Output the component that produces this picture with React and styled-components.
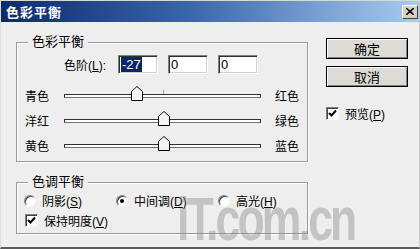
import React from "react";
import styled, { createGlobalStyle } from "styled-components";

const GlobalStyle = createGlobalStyle`
  html, body {
    margin: 0;
    padding: 0;
    background: #eeeeee;
  }
  body {
    font-family: "Liberation Sans", "Noto Sans CJK SC", sans-serif;
    font-size: 12px;
    color: #000;
  }
`;

const Window = styled.div`
  position: relative;
  width: 420px;
  height: 249px;
  box-sizing: border-box;
  background: #eeeeee;
  border-left: 1px solid #dcdcdc;
  border-right: 1px solid #c8c8c8;
  border-bottom: 2px solid #5a5a5a;
  overflow: hidden;
`;

const TitleBar = styled.div`
  height: 21px;
  display: flex;
  align-items: center;
  justify-content: space-between;
  padding: 0 1px 0 5px;
  background: linear-gradient(to right, #0c2a6c 0%, #3a66aa 45%, #a8ccf0 100%);
  border-top: 1px solid #d8d8d8;
`;

const TitleText = styled.span`
  color: #fff;
  font-weight: 700;
  font-size: 13px;
  letter-spacing: 1px;
`;

const CloseButton = styled.div`
  width: 16px;
  height: 14px;
  box-sizing: border-box;
  background: #d4d0c8;
  border: 1px solid;
  border-color: #fff #404040 #404040 #fff;
  display: flex;
  align-items: center;
  justify-content: center;
`;

const Body = styled.div`
  display: flex;
  padding: 20px 0 0 15px;
  gap: 18px;
`;

const LeftColumn = styled.div`
  display: flex;
  flex-direction: column;
  gap: 20px;
  width: 292px;
`;

const Group = styled.div`
  position: relative;
  box-sizing: border-box;
  height: ${(p) => p.$h}px;
  border: 1px solid #9a9a9a;
  box-shadow: inset 1px 1px 0 #fff, 1px 1px 0 #fff;
  padding: ${(p) => p.$pad};
`;

const GroupTitle = styled.span`
  position: absolute;
  top: -9px;
  left: 11px;
  padding: 0 4px;
  background: #eeeeee;
  font-size: 13px;
  line-height: 16px;
`;

const LevelsRow = styled.div`
  display: flex;
  align-items: center;
  margin-left: 47px;
  height: 19px;
`;

const LevelsLabel = styled.span`
  width: 54px;
  font-size: 12px;
  white-space: nowrap;
`;

const Field = styled.div`
  width: 40px;
  height: 19px;
  box-sizing: border-box;
  margin-right: 10px;
  border: 1px solid;
  border-color: #808080 #fff #fff #808080;
  box-shadow: inset 1px 1px 0 #303030, inset -1px -1px 0 #d4d0c8;
  background: #fff;
  display: flex;
  align-items: center;
  padding-left: 2px;
  font-size: 13px;
`;

const Selected = styled.span`
  background: #0a246a;
  color: #fff;
  line-height: 15px;
  padding: 0 1px;
`;

const SliderList = styled.div`
  display: flex;
  flex-direction: column;
  gap: 10px;
  margin-top: 13px;
`;

const SliderRow = styled.div`
  display: grid;
  grid-template-columns: 39px 197px auto;
  align-items: center;
  height: 15px;
  margin-left: 8px;
`;

const SliderRowLabel = styled.span`
  font-size: 12px;
  white-space: nowrap;
  padding-left: ${(p) => (p.$end ? 14 : 0)}px;
`;

const Track = styled.div`
  position: relative;
  height: 4px;
  box-sizing: border-box;
  background: #fff;
  border: 1px solid #303030;
  border-bottom-color: #707070;
  width: 197px;
`;

const Tick = styled.div`
  position: absolute;
  left: 98px;
  top: -5px;
  width: 1px;
  height: 4px;
  background: #a0a0a0;
`;

const Thumb = styled.svg`
  position: absolute;
  top: -9px;
  width: 12px;
  height: 15px;
  margin-left: -6px;
`;

const RadioRow = styled.div`
  display: grid;
  grid-template-columns: 92px 102px auto;
  margin-left: 7px;
  height: 16px;
  align-items: center;
`;

const Option = styled.label`
  display: flex;
  align-items: center;
  gap: 6px;
  font-size: 12px;
  white-space: nowrap;
`;

const Radio = styled.span`
  width: 12px;
  height: 12px;
  box-sizing: border-box;
  border-radius: 50%;
  background: #fff;
  border: 1px solid;
  border-color: #808080 #f4f4f4 #f4f4f4 #808080;
  box-shadow: inset 1px 1px 0 #404040;
  display: flex;
  align-items: center;
  justify-content: center;
  &::after {
    content: "";
    width: 4px;
    height: 4px;
    border-radius: 50%;
    background: ${(p) => (p.$on ? "#000" : "transparent")};
  }
`;

const Check = styled.span`
  width: 13px;
  height: 13px;
  box-sizing: border-box;
  background: #fff;
  border: 1px solid;
  border-color: #808080 #f4f4f4 #f4f4f4 #808080;
  box-shadow: inset 1px 1px 0 #404040;
  display: flex;
  align-items: center;
  justify-content: center;
`;

const Key = styled.u`
  text-decoration: underline;
`;

const CheckRow = styled.div`
  margin: 4px 0 0 8px;
`;

const RightColumn = styled.div`
  display: flex;
  flex-direction: column;
  width: 82px;
  margin-top: -4px;
`;

const Button = styled.div`
  height: 21px;
  box-sizing: border-box;
  background: #dedbd6;
  border: 1px solid #000;
  box-shadow: inset 1px 1px 0 #fff, inset -1px -1px 0 #808080;
  display: flex;
  align-items: center;
  justify-content: center;
  font-size: 13px;
  margin-bottom: 7px;
`;

const PreviewRow = styled.div`
  margin-top: 11px;
`;

const Watermark = styled.div`
  position: absolute;
  left: 176px;
  top: 188px;
  font-family: "Liberation Sans", Arial, sans-serif;
  font-weight: 700;
  font-size: 62px;
  letter-spacing: -4px;
  transform: scaleX(0.72);
  transform-origin: left top;
  color: rgba(130, 130, 130, 0.4);
  pointer-events: none;
  line-height: 1;
`;

const CheckMark = () => (
  <svg width="9" height="9" viewBox="0 0 9 9">
    <path d="M1 4 L3.5 6.5 L8 1.5" stroke="#000" strokeWidth="2" fill="none" />
  </svg>
);

const Caption = ({ text, hotkey }) => (
  <span>
    {text}(<Key>{hotkey}</Key>)
  </span>
);

const sliders = [
  { left: "青色", right: "红色", value: -27 },
  { left: "洋红", right: "绿色", value: 0 },
  { left: "黄色", right: "蓝色", value: 0 },
];

const Slider = ({ left, right, value }) => (
  <SliderRow>
    <SliderRowLabel>{left}</SliderRowLabel>
    <Track>
      <Tick />
      <Thumb
        viewBox="0 0 12 15"
        style={{ left: `${((value + 100) / 200) * 195 + 1}px` }}
      >
        <path
          d="M0.5 14.5 V5.5 L6 0.5 L11.5 5.5 V14.5 Z"
          fill="#f4f4f4"
          stroke="#000"
          strokeWidth="1"
        />
        <path d="M1.5 13.5 V6 L6 2" fill="none" stroke="#fff" />
      </Thumb>
    </Track>
    <SliderRowLabel $end>{right}</SliderRowLabel>
  </SliderRow>
);

export default function App() {
  return (
    <>
      <GlobalStyle />
      <Window>
        <TitleBar>
          <TitleText>色彩平衡</TitleText>
          <CloseButton>
            <svg width="8" height="7" viewBox="0 0 8 7">
              <path d="M0 0 L8 7 M8 0 L0 7" stroke="#000" strokeWidth="1.6" />
            </svg>
          </CloseButton>
        </TitleBar>
        <Body>
          <LeftColumn>
            <Group $h={120} $pad="12px 0 0 0">
              <GroupTitle>色彩平衡</GroupTitle>
              <LevelsRow>
                <LevelsLabel>
                  色阶(<Key>L</Key>):
                </LevelsLabel>
                <Field>
                  <Selected>-27</Selected>
                </Field>
                <Field>0</Field>
                <Field>0</Field>
              </LevelsRow>
              <SliderList>
                {sliders.map((s) => (
                  <Slider key={s.left} {...s} />
                ))}
              </SliderList>
            </Group>
            <Group $h={52} $pad="9px 0 0 0">
              <GroupTitle>色调平衡</GroupTitle>
              <RadioRow>
                <Option>
                  <Radio />
                  <Caption text="阴影" hotkey="S" />
                </Option>
                <Option>
                  <Radio $on />
                  <Caption text="中间调" hotkey="D" />
                </Option>
                <Option>
                  <Radio />
                  <Caption text="高光" hotkey="H" />
                </Option>
              </RadioRow>
              <CheckRow>
                <Option>
                  <Check>
                    <CheckMark />
                  </Check>
                  <Caption text="保持明度" hotkey="V" />
                </Option>
              </CheckRow>
            </Group>
          </LeftColumn>
          <RightColumn>
            <Button>确定</Button>
            <Button>取消</Button>
            <PreviewRow>
              <Option>
                <Check>
                  <CheckMark />
                </Check>
                <Caption text="预览" hotkey="P" />
              </Option>
            </PreviewRow>
          </RightColumn>
        </Body>
        <Watermark>iT.com.cn</Watermark>
      </Window>
    </>
  );
}
